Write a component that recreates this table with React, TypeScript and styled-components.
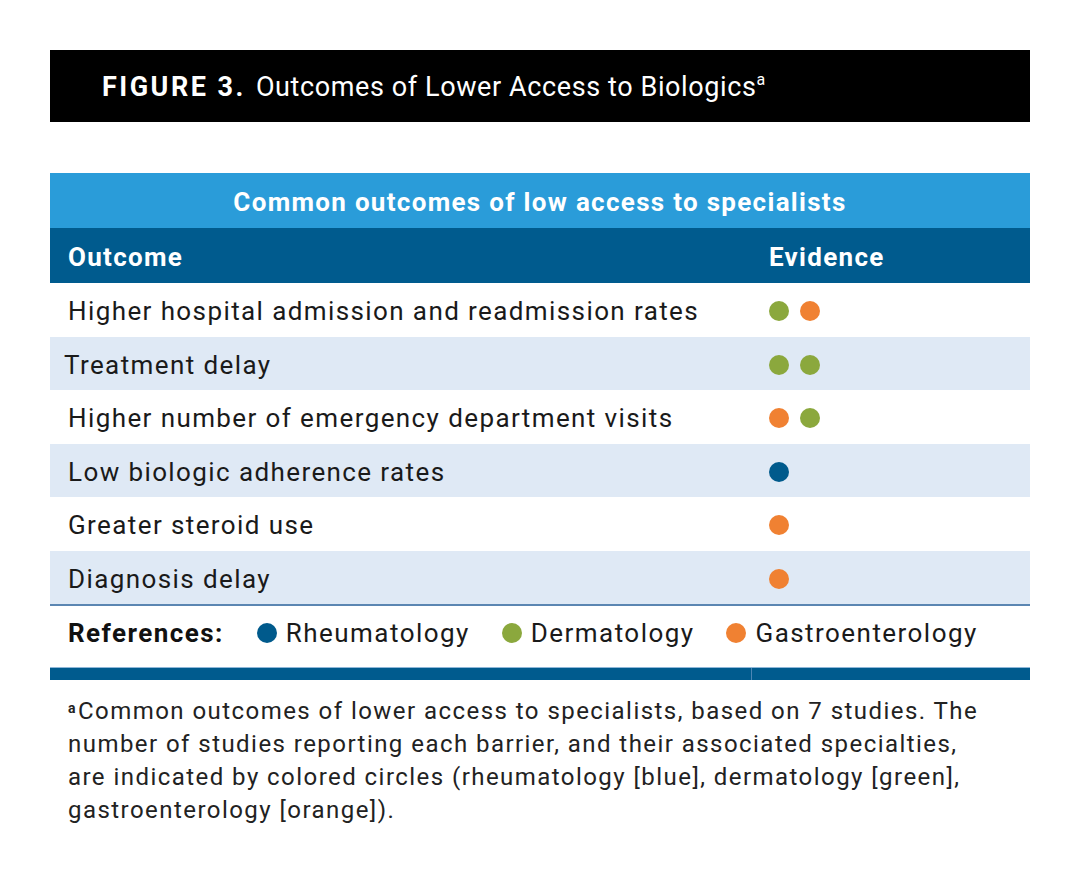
import React from "react";
import styled, { createGlobalStyle } from "styled-components";

const GlobalStyle = createGlobalStyle`
  html, body { margin: 0; padding: 0; background: #ffffff; }
  body { font-family: Roboto, "Liberation Sans", sans-serif; color: #1a1a1a; }
`;

const colors = {
  light: "#2a9cd9",
  dark: "#005b8e",
  alt: "#dfe9f5",
  green: "#8ba83d",
  orange: "#f08132",
  blue: "#005a8c",
};

type DotKind = "green" | "orange" | "blue";

const Page = styled.div`
  width: 980px;
  padding: 50px 51px 40px 50px;
`;

const FigureBar = styled.div`
  height: 72px;
  background: #000;
  display: flex;
  align-items: center;
  padding-left: 52px;
  padding-top: 2px;
  box-sizing: border-box;
  color: #fff;
  font-size: 27px;
`;

const FigureLabel = styled.span`
  font-weight: 700;
  letter-spacing: 2.5px;
  margin-right: 10px;
`;

const FigureTitle = styled.span`
  font-weight: 400;
  letter-spacing: 0.6px;
`;

const Sup = styled.sup`
  font-size: 16px;
  vertical-align: top;
  position: relative;
  top: -1px;
  margin-left: 0;
  letter-spacing: 0;
`;

const Table = styled.div`
  margin-top: 51px;
  display: flex;
  flex-direction: column;
`;

const TitleRow = styled.div`
  height: 55px;
  background: ${colors.light};
  color: #fff;
  font-weight: 700;
  font-size: 26px;
  letter-spacing: 1.3px;
  display: flex;
  align-items: center;
  justify-content: center;
  padding-top: 2px;
  box-sizing: border-box;
`;

const Row = styled.div<{ $bg: string; $h: number }>`
  display: grid;
  grid-template-columns: 701px 1fr;
  height: ${(p) => p.$h}px;
  background: ${(p) => p.$bg};
  align-items: center;
  padding-top: 2px;
  box-sizing: border-box;
`;

const HeadCell = styled.div`
  padding-left: 18px;
  color: #fff;
  font-weight: 700;
  font-size: 26px;
  letter-spacing: 1.3px;
`;

const Cell = styled.div<{ $indent?: number }>`
  padding-left: ${(p) => p.$indent ?? 18}px;
  font-size: 26px;
  letter-spacing: 1.4px;
  color: #1a1a1a;
`;

const Dots = styled.div`
  display: flex;
  gap: 11px;
  padding-left: 18px;
`;

const Dot = styled.span<{ $c: DotKind }>`
  display: inline-block;
  width: 20px;
  height: 20px;
  border-radius: 50%;
  background: ${(p) => colors[p.$c]};
  flex-shrink: 0;
`;

const RefRow = styled.div`
  border-top: 2px solid #5b86b2;
  height: 61px;
  box-sizing: border-box;
  display: flex;
  align-items: center;
  padding-left: 18px;
  padding-bottom: 6px;
  font-size: 26px;
  letter-spacing: 1.45px;
`;

const RefLabel = styled.span`
  font-weight: 700;
  margin-right: 33px;
  color: #111;
`;

const RefItem = styled.span`
  display: inline-flex;
  align-items: center;
  gap: 9px;
  margin-right: 32px;
`;

const BottomBar = styled.div`
  margin-top: 2px;
  height: 12px;
  display: grid;
  grid-template-columns: 701px 1fr;
  gap: 1px;
  background: #4d86b5;
  border-top: 1px solid #8fb7d8;
`;

const BarPart = styled.div`
  background: ${colors.dark};
`;

const Footnote = styled.p`
  margin: 15px 0 0 18px;
  font-size: 24px;
  line-height: 33px;
  letter-spacing: 1.45px;
  color: #222;
  width: 960px;
  white-space: nowrap;
`;

const FootSup = styled.span`
  font-size: 14px;
  font-weight: 700;
  vertical-align: top;
  position: relative;
  top: -3px;
  margin-right: 1px;
`;

const rows: { text: string; dots: DotKind[]; indent?: number }[] = [
  { text: "Higher hospital admission and readmission rates", dots: ["green", "orange"] },
  { text: "Treatment delay", dots: ["green", "green"], indent: 14 },
  { text: "Higher number of emergency department visits", dots: ["orange", "green"] },
  { text: "Low biologic adherence rates", dots: ["blue"] },
  { text: "Greater steroid use", dots: ["orange"] },
  { text: "Diagnosis delay", dots: ["orange"] },
];

export default function App() {
  return (
    <>
      <GlobalStyle />
      <Page>
        <FigureBar>
          <FigureLabel>FIGURE 3.</FigureLabel>
          <FigureTitle>
            Outcomes of Lower Access to Biologics<Sup>a</Sup>
          </FigureTitle>
        </FigureBar>
        <Table>
          <TitleRow>Common outcomes of low access to specialists</TitleRow>
          <Row $bg={colors.dark} $h={55}>
            <HeadCell>Outcome</HeadCell>
            <HeadCell>Evidence</HeadCell>
          </Row>
          {rows.map((r, i) => (
            <Row key={i} $bg={i % 2 === 0 ? "#ffffff" : colors.alt} $h={i % 2 === 0 ? 54 : 53}>
              <Cell $indent={r.indent}>{r.text}</Cell>
              <Dots>
                {r.dots.map((d, j) => (
                  <Dot key={j} $c={d} />
                ))}
              </Dots>
            </Row>
          ))}
          <RefRow>
            <RefLabel>References:</RefLabel>
            <RefItem>
              <Dot $c="blue" />
              Rheumatology
            </RefItem>
            <RefItem>
              <Dot $c="green" />
              Dermatology
            </RefItem>
            <RefItem>
              <Dot $c="orange" />
              Gastroenterology
            </RefItem>
          </RefRow>
          <BottomBar>
            <BarPart />
            <BarPart />
          </BottomBar>
        </Table>
        <Footnote>
          <FootSup>a</FootSup>Common outcomes of lower access to specialists, based on 7 studies. The
          <br />
          number of studies reporting each barrier, and their associated specialties,
          <br />
          are indicated by colored circles (rheumatology [blue], dermatology [green],
          <br />
          gastroenterology [orange]).
        </Footnote>
      </Page>
    </>
  );
}
